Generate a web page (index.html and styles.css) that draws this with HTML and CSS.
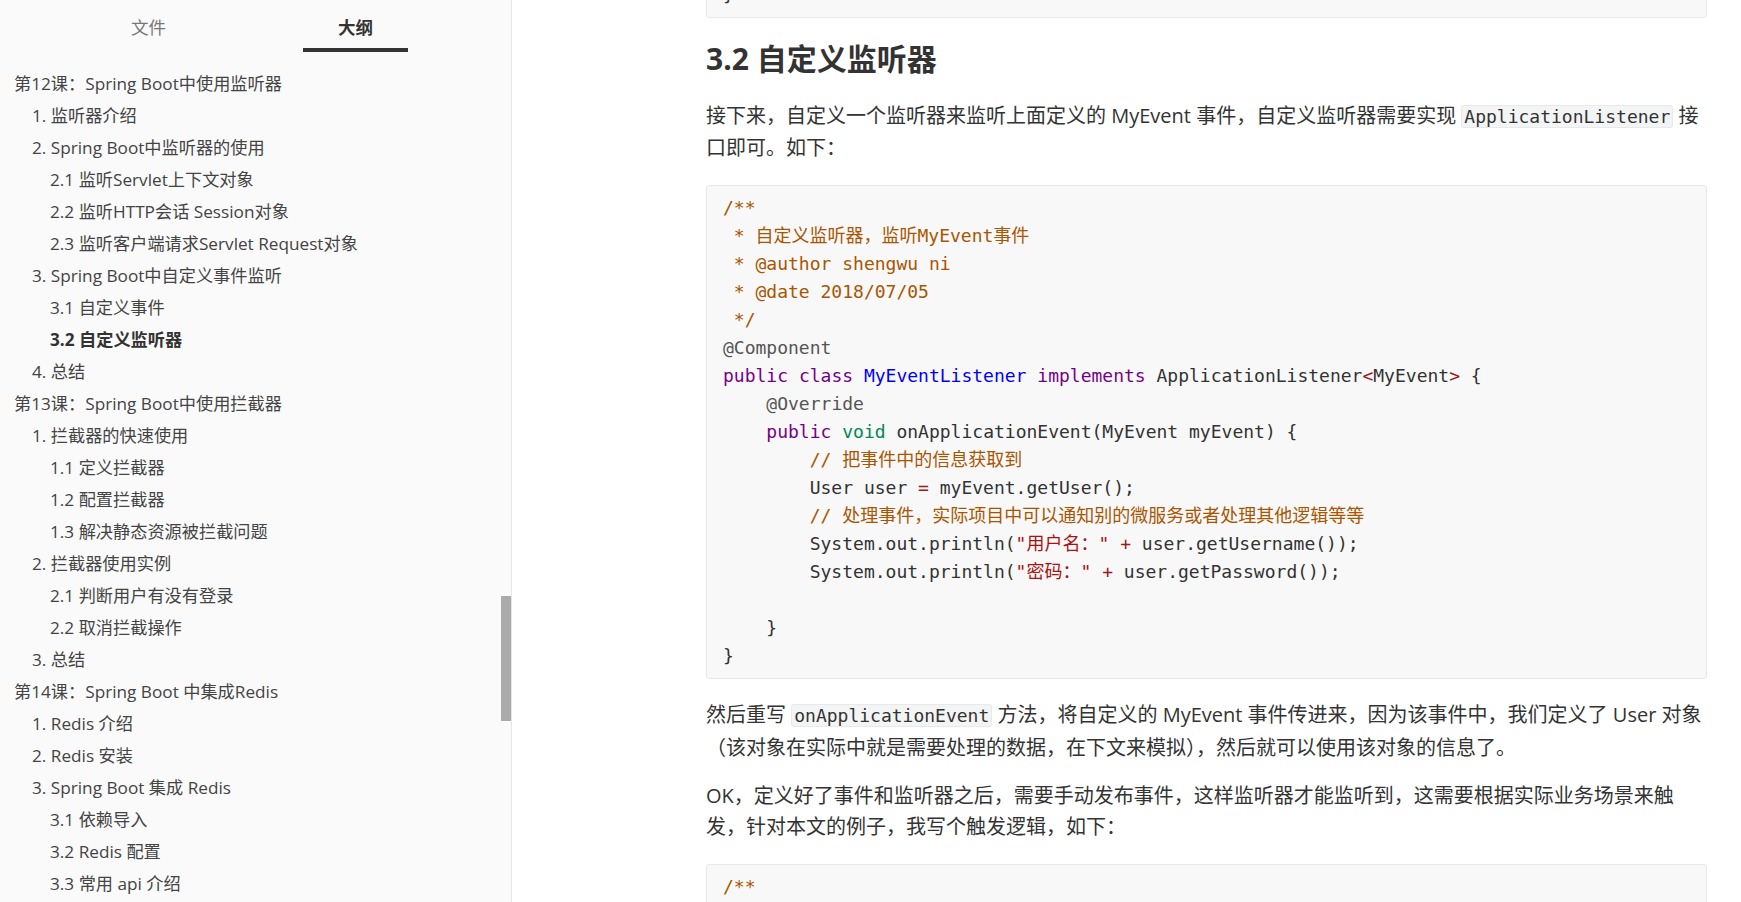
FILE: index.html
```html
<!DOCTYPE html>
<html lang="zh-CN">
<head>
    <meta charset="UTF-8">
    <meta name="viewport" content="width=device-width, initial-scale=1.0">
    <title>第12课：Spring Boot中使用监听器</title>
    <link rel="stylesheet" href="styles.css">
</head>
<body>

<div class="app">
    <aside class="sidebar">
        <div class="tabs">
            <div class="tab">文件</div>
            <div class="tab active">大纲</div>
        </div>

        <ul class="outline">
            <li class="lv1">第12课：Spring Boot中使用监听器</li>
            <li class="lv2">1. 监听器介绍</li>
            <li class="lv2">2. Spring Boot中监听器的使用</li>
            <li class="lv3">2.1 监听Servlet上下文对象</li>
            <li class="lv3">2.2 监听HTTP会话 Session对象</li>
            <li class="lv3">2.3 监听客户端请求Servlet Request对象</li>
            <li class="lv2">3. Spring Boot中自定义事件监听</li>
            <li class="lv3">3.1 自定义事件</li>
            <li class="lv3 active">3.2 自定义监听器</li>
            <li class="lv2">4. 总结</li>
            <li class="lv1">第13课：Spring Boot中使用拦截器</li>
            <li class="lv2">1. 拦截器的快速使用</li>
            <li class="lv3">1.1 定义拦截器</li>
            <li class="lv3">1.2 配置拦截器</li>
            <li class="lv3">1.3 解决静态资源被拦截问题</li>
            <li class="lv2">2. 拦截器使用实例</li>
            <li class="lv3">2.1 判断用户有没有登录</li>
            <li class="lv3">2.2 取消拦截操作</li>
            <li class="lv2">3. 总结</li>
            <li class="lv1">第14课：Spring Boot 中集成Redis</li>
            <li class="lv2">1. Redis 介绍</li>
            <li class="lv2">2. Redis 安装</li>
            <li class="lv2">3. Spring Boot 集成 Redis</li>
            <li class="lv3">3.1 依赖导入</li>
            <li class="lv3">3.2 Redis 配置</li>
            <li class="lv3">3.3 常用 api 介绍</li>
        </ul>

        <div class="scrollbar"></div>
    </aside>

    <main class="editor">
        <article class="content">
            <pre class="fence prev"><code>}</code></pre>

            <h3>3.2 自定义监听器</h3>

            <p>接下来，自定义一个监听器来监听上面定义的 MyEvent 事件，自定义监听器需要实现 <code class="inline">ApplicationListener</code> 接口即可。如下：</p>

<pre class="fence"><code><span class="c">/**
 * 自定义监听器，监听MyEvent事件
 * @author shengwu ni
 * @date 2018/07/05
 */</span>
<span class="m">@Component</span>
<span class="k">public</span> <span class="k">class</span> <span class="d">MyEventListener</span> <span class="k">implements</span> ApplicationListener<span class="o">&lt;</span>MyEvent<span class="o">&gt;</span> {
    <span class="m">@Override</span>
    <span class="k">public</span> <span class="t">void</span> onApplicationEvent(MyEvent myEvent) {
        <span class="c">// 把事件中的信息获取到</span>
        User user <span class="o">=</span> myEvent.getUser();
        <span class="c">// 处理事件，实际项目中可以通知别的微服务或者处理其他逻辑等等</span>
        System.out.println(<span class="s">"用户名："</span> <span class="o">+</span> user.getUsername());
        System.out.println(<span class="s">"密码："</span> <span class="o">+</span> user.getPassword());

    }
}</code></pre>

            <p>然后重写 <code class="inline">onApplicationEvent</code> 方法，将自定义的 MyEvent 事件传进来，因为该事件中，我们定义了 User 对象（该对象在实际中就是需要处理的数据，在下文来模拟），然后就可以使用该对象的信息了。</p>

            <p>OK，定义好了事件和监听器之后，需要手动发布事件，这样监听器才能监听到，这需要根据实际业务场景来触发，针对本文的例子，我写个触发逻辑，如下：</p>

<pre class="fence"><code><span class="c">/**
 * UserService
 * @author shengwu ni
 */</span>
<span class="m">@Service</span>
<span class="k">public</span> <span class="k">class</span> <span class="d">UserService</span> {</code></pre>
        </article>
    </main>
</div>

</body>
</html>
```

FILE: styles.css
```css
body {
    margin: 0;
    font-family: "Open Sans", "Noto Sans CJK SC", sans-serif;
    color: #333;
    background-color: #fff;
}

.app {
    display: flex;
    height: 100vh;
    overflow: hidden;
}

/* Sidebar */
.sidebar {
    position: relative;
    flex: none;
    width: 511px;
    background-color: #fafafa;
    border-right: 1px solid #e6e6e6;
    overflow: hidden;
}

.tabs {
    display: flex;
    gap: 102px;
    padding-left: 96px;
}

.tab {
    width: 105px;
    padding: 14px 0 8px;
    font-size: 17.5px;
    line-height: 26px;
    text-align: center;
    color: #777;
    border-bottom: 4px solid transparent;
}

.tab.active {
    color: #333;
    font-weight: bold;
    border-bottom-color: #333;
}

.outline {
    list-style: none;
    margin: 16px 0 0;
    padding: 0;
    font-size: 17.2px;
    color: #444;
}

.outline li {
    height: 32px;
    line-height: 32px;
    white-space: nowrap;
}

.outline .lv1 {
    padding-left: 14px;
}

.outline .lv2 {
    padding-left: 32px;
}

.outline .lv3 {
    padding-left: 50px;
}

.outline .active {
    color: #333;
    font-weight: bold;
}

.scrollbar {
    position: absolute;
    left: 501px;
    top: 596px;
    width: 10px;
    height: 125px;
    background-color: #ababab;
}

/* Editor */
.editor {
    flex: 1;
    overflow: hidden;
}

.content {
    width: 1001px;
    margin-left: 194px;
}

.content h3 {
    margin: 20px 0;
    font-size: 30px;
    line-height: 42px;
    font-weight: bold;
    color: #333;
}

.content p {
    margin: 0 0 17px;
    font-size: 20px;
    line-height: 31.2px;
}

.inline {
    font-family: "DejaVu Sans Mono", "Noto Sans CJK SC", monospace;
    font-size: 18px;
    padding: 0 2px;
    background-color: #f3f4f4;
    border: 1px solid #e7eaed;
    border-radius: 3px;
}

.fence {
    margin: 22px 0 20px;
    padding: 8px 16px;
    background-color: #f8f8f8;
    border: 1px solid #e7eaed;
    border-radius: 3px;
    font-family: "DejaVu Sans Mono", "Noto Sans CJK SC", monospace;
    font-size: 18px;
    line-height: 28px;
    color: #333;
    white-space: pre;
    overflow: hidden;
}

.fence code {
    font-family: inherit;
}

.fence.prev {
    margin-top: -28px;
}

/* Code tokens */
.c { color: #a50; }
.k { color: #708; }
.d { color: #00f; }
.t { color: #085; }
.m { color: #555; }
.o { color: #981a1a; }
.s { color: #a11; }
```
